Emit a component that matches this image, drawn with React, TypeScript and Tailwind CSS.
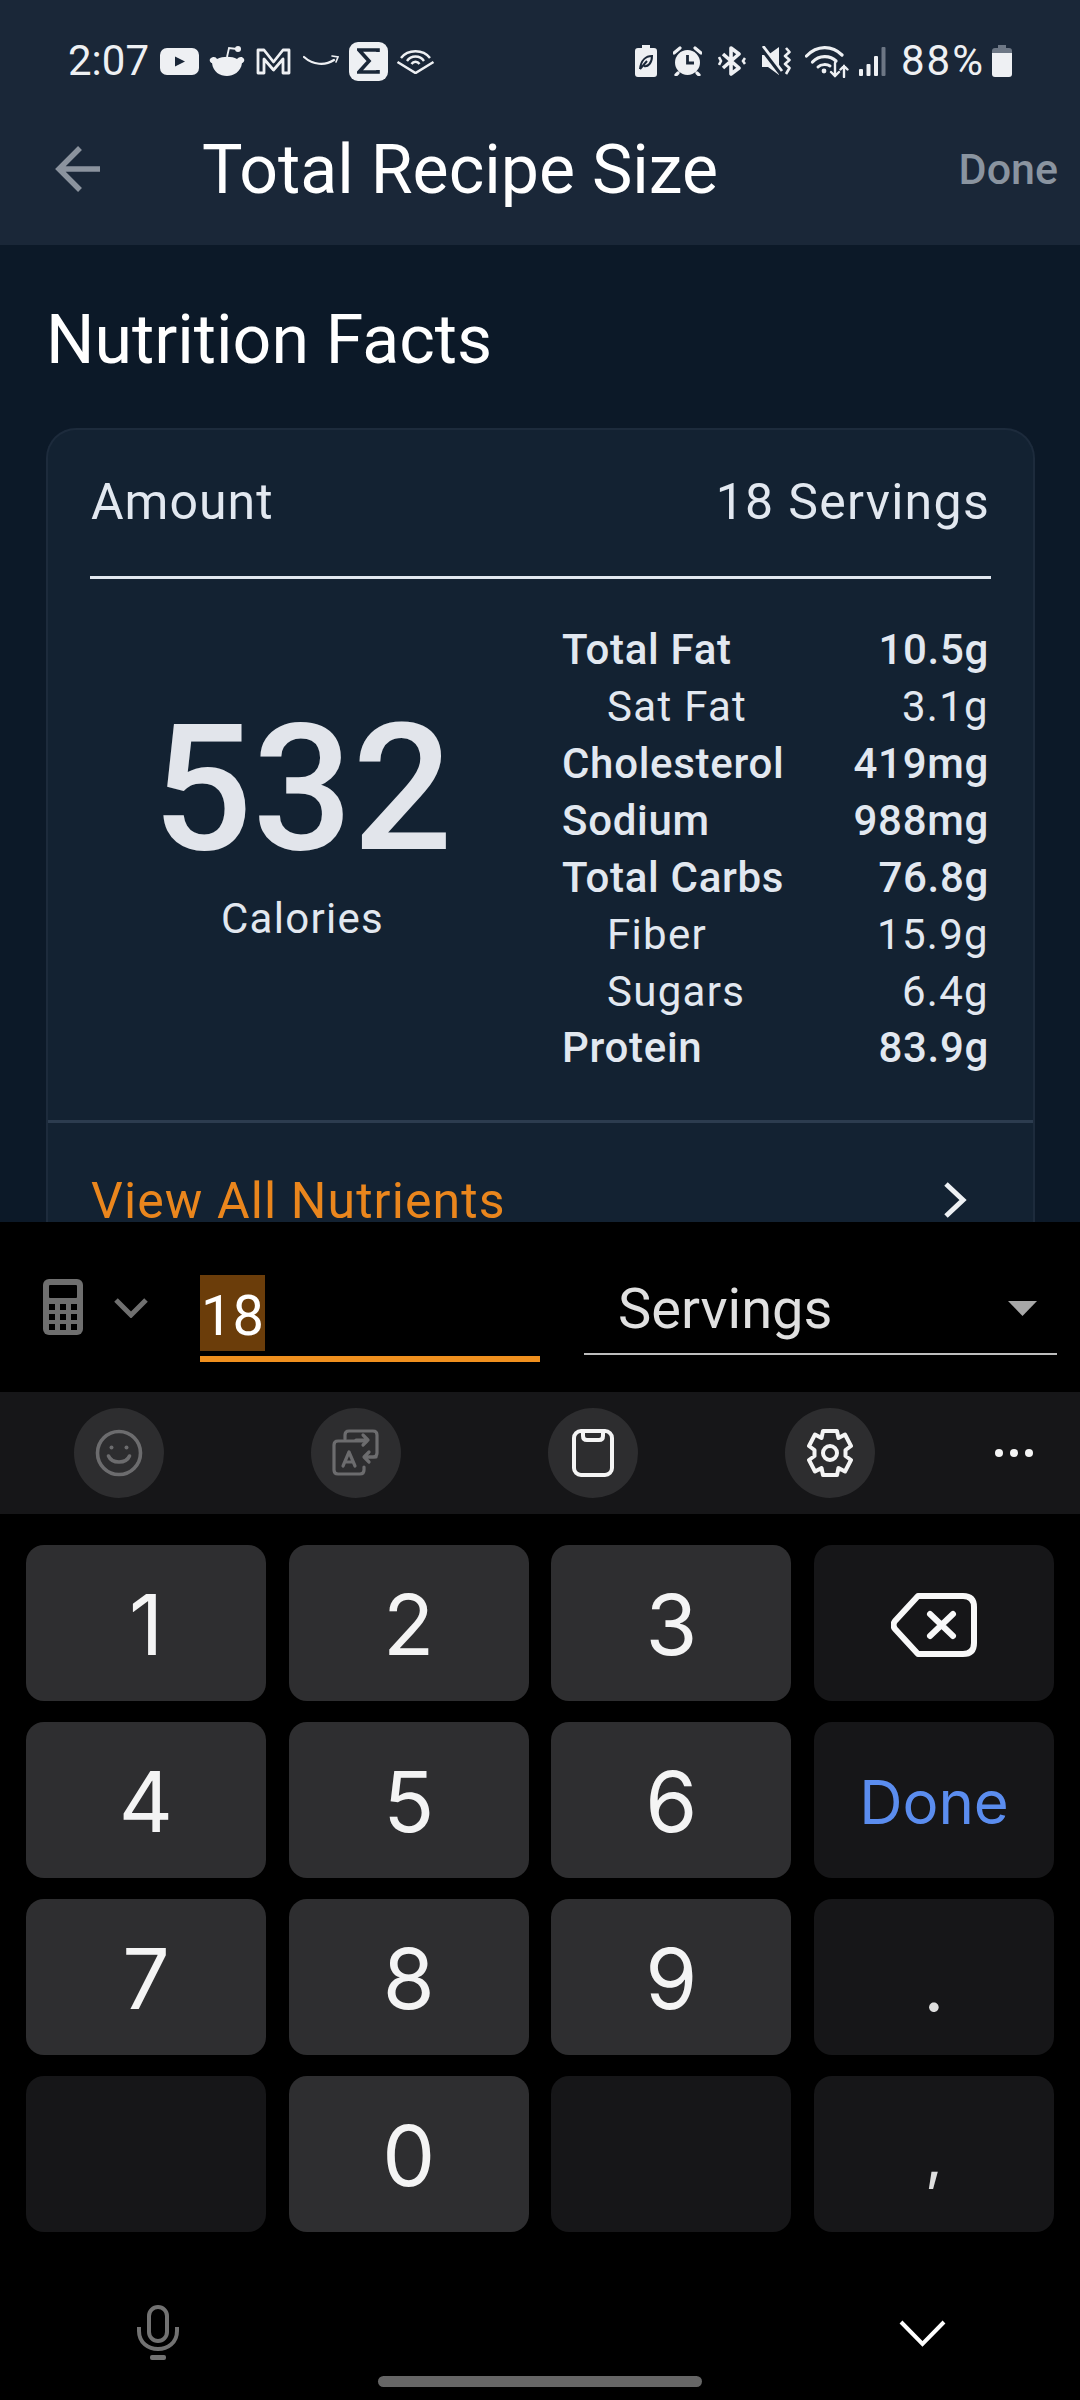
import React from "react";

const roboto = "font-['Roboto',sans-serif]";
const inter = "font-['Inter',sans-serif]";

const rows: [string, string, boolean][] = [
  ["Total Fat", "10.5g", true],
  ["Sat Fat", "3.1g", false],
  ["Cholesterol", "419mg", true],
  ["Sodium", "988mg", true],
  ["Total Carbs", "76.8g", true],
  ["Fiber", "15.9g", false],
  ["Sugars", "6.4g", false],
  ["Protein", "83.9g", true],
];

function StatusLeft() {
  const c = "#eef0f3";
  return (
    <div className="flex items-center">
      <span className="w-[92px] font-['Roboto',sans-serif] text-[42px] leading-[40px] text-[#eef0f3]">2:07</span>
      <svg width="39" height="27" viewBox="0 0 39 27"><rect width="39" height="27" rx="7" fill={c} /><path d="M15 8.5 L25 13.5 L15 18.5Z" fill="#1a2738" /></svg>
      <svg className="ml-[10px]" width="36" height="32" viewBox="0 0 36 32">
        <path d="M1 14 C4 11 7 12 8 14 C14 11 23 11 28 14 C30 12 33 11 35 14 C36 16 34 18 33 18 C32 27 24 31 18 31 C11 31 4 27 3 18 C2 18 0 16 1 14Z" fill={c} />
        <path d="M18 12 L20 3 L28 4" stroke={c} strokeWidth="1.8" fill="none" />
        <circle cx="29" cy="4" r="3" fill={c} />
      </svg>
      <svg className="ml-[11px]" width="35" height="28" viewBox="0 0 35 28" fill="none">
        <path d="M2 26 V3 H8 L17.5 15 L27 3 H33 V26 H27 V12 L17.5 23 L8 12 V26Z" stroke={c} strokeWidth="2.8" strokeLinejoin="round" />
      </svg>
      <svg className="ml-[12px]" width="36" height="14" viewBox="0 0 36 14" fill="none">
        <path d="M1 3 C10 11 22 12 31 6" stroke={c} strokeWidth="2.2" strokeLinecap="round" />
        <path d="M29 2 L35 3 L33 8" stroke={c} strokeWidth="1.6" strokeLinecap="round" />
      </svg>
      <div className="ml-[10px] flex h-[39px] w-[39px] items-center justify-center rounded-[9px] bg-[#eef0f3]">
        <svg width="23" height="26" viewBox="0 0 23 26" fill="none"><path d="M21 4 V2 H2 L12 13 L2 24 H21 V22" stroke="#1a2738" strokeWidth="3.6" /></svg>
      </div>
      <svg className="ml-[8px]" width="39" height="25" viewBox="0 0 39 25" fill="none" stroke={c}>
        <path d="M1.5 13 L19.5 24 L37.5 13" strokeWidth="2.6" strokeLinejoin="round" />
        <path d="M5 9 C12 0 27 0 34 9 M11 12 C15 6 24 6 28 12 M15.5 15 C17.5 12 21.5 12 23.5 15" strokeWidth="2.4" />
      </svg>
    </div>
  );
}

function StatusRight() {
  const c = "#eef0f3";
  return (
    <div className="flex items-center">
      <svg width="22" height="32" viewBox="0 0 22 32">
        <path d="M7 0 H15 V3 H19 Q22 3 22 6 V29 Q22 32 19 32 H3 Q0 32 0 29 V6 Q0 3 3 3 H7Z" fill={c} />
        <path d="M5 24 C6 15 11 11 17 11 C17 18 13 22 9 21 M5 24 L12 16" stroke="#1a2738" strokeWidth="2" fill="none" />
      </svg>
      <svg className="ml-[16px]" width="29" height="30" viewBox="0 0 29 30">
        <circle cx="14.5" cy="16.5" r="12.5" fill={c} />
        <path d="M14.5 9 V17 H21" stroke="#1a2738" strokeWidth="2.8" fill="none" />
        <path d="M1 7 L7 2 M28 7 L22 2 M5 27 L3 29 M24 27 L26 29" stroke={c} strokeWidth="3.2" strokeLinecap="round" />
      </svg>
      <svg className="ml-[16px]" width="28" height="30" viewBox="0 0 28 30" fill="none" stroke={c} strokeWidth="3.6">
        <path d="M5 8 L21 22 L13 28 V2 L21 8 L5 22" strokeLinejoin="round" />
        <path d="M1 11 L3 15 L1 19 M27 12 L25 15 L27 18" strokeWidth="2.6" />
      </svg>
      <svg className="ml-[16px]" width="29" height="30" viewBox="0 0 29 30" fill="none">
        <path d="M0 9 H6 L17 1 V29 L6 21 H0Z" fill={c} />
        <path d="M0 2 L19 27" stroke="#1a2738" strokeWidth="5" />
        <path d="M1 0 L20 25" stroke={c} strokeWidth="2.8" />
        <path d="M24 2 L27.5 6 L23 10 L27.5 14 L23 18 L27.5 22 L24 28" stroke={c} strokeWidth="2.6" strokeLinejoin="round" />
      </svg>
      <svg className="ml-[14px]" width="45" height="33" viewBox="0 0 45 33" fill="none" stroke={c} strokeLinecap="round">
        <path d="M1.5 11 C12 0 27 0 37 10" strokeWidth="3.2" />
        <path d="M7.5 17 C14 10 25 10 31 16" strokeWidth="3.2" />
        <path d="M13 22 C16 19 22 19 25 21" strokeWidth="3" />
        <circle cx="19" cy="26" r="2.4" fill={c} stroke="none" />
        <path d="M30 18 V31 M26 27 L30 31 L34 27 M39 32 V21 M35.5 24.5 L39 21 L42.5 24.5" strokeWidth="2.4" />
      </svg>
      <svg className="ml-[9px]" width="27" height="29" viewBox="0 0 27 29">
        <rect x="0" y="22" width="4" height="7" rx="1" fill={c} />
        <rect x="7.5" y="17" width="4" height="12" rx="1" fill={c} />
        <rect x="15" y="9" width="4" height="20" rx="1" fill={c} />
        <rect x="22.5" y="0" width="4" height="29" rx="1" fill="#6d7785" />
      </svg>
      <span className="ml-[15px] w-[85px] whitespace-nowrap font-['Roboto',sans-serif] text-[42px] leading-[40px] tracking-[2px] text-[#eef0f3]">88%</span>
      <svg className="ml-[6px]" width="20" height="32" viewBox="0 0 20 32">
        <path d="M6 0 H14 V3 H17 Q20 3 20 6 V10 H0 V6 Q0 3 3 3 H6Z" fill="#6d7785" />
        <path d="M0 8 H20 V29 Q20 32 17 32 H3 Q0 32 0 29Z" fill={c} />
      </svg>
    </div>
  );
}

function Key({ children, fn }: { children?: React.ReactNode; fn?: boolean }) {
  return (
    <div className={`flex h-[156px] items-center justify-center rounded-[18px] pt-[3px] ${fn ? "bg-[#161618]" : "bg-[#2e2e30]"} ${inter} text-[84px] leading-none text-[#f4f4f4]`}>
      {children}
    </div>
  );
}

function Round({ children }: { children: React.ReactNode }) {
  return <div className="flex h-[90px] w-[90px] items-center justify-center rounded-full bg-[#2d2d2f]">{children}</div>;
}

export default function App() {
  return (
    <div className={`flex h-[2400px] w-[1080px] flex-col overflow-hidden bg-black ${roboto}`}>
      {/* header */}
      <header className="flex h-[245px] flex-col bg-[#1a2738]">
        <div className="flex h-[124px] items-center justify-between pb-[2px] pl-[68px] pr-[68px]">
          <StatusLeft />
          <StatusRight />
        </div>
        <div className="flex h-[90px] items-center pl-[55px] pr-[22px]">
          <svg width="45" height="46" viewBox="0 0 45 46" fill="none" stroke="#8b939e" strokeWidth="5.5">
            <path d="M45 23 H4 M25 2 L4 23 L25 44" />
          </svg>
          <h1 className="ml-[102px] flex-1 pt-[2px] text-[68px] font-normal leading-none text-white">Total Recipe Size</h1>
          <span className="text-[43px] font-medium leading-none text-[#8a94a0]">Done</span>
        </div>
      </header>

      {/* content */}
      <main className="h-[977px] overflow-hidden bg-[#0c1928] pl-[46px] pr-[45px]">
        <h2 className="mt-[62px] h-[74px] text-[68px] font-normal leading-[66px] text-white">Nutrition Facts</h2>
        <section className="mt-[47px] rounded-t-[30px] border-x-2 border-t-2 border-[#1d2b3c] bg-[#132232]">
          <div className="flex h-[146px] items-center justify-between px-[43px] pb-[2px] text-[50px] leading-none tracking-[1px] text-[#e2e8f0]">
            <span>Amount</span>
            <span className="tracking-[1.3px]">18 Servings</span>
          </div>
          <div className="mx-[42px] h-[3px] bg-[#e2e8f0]" />
          <div className="flex h-[541px] items-start">
            <div className="flex w-[514px] flex-col items-center pr-[5px] pt-[122px]">
              <span className="text-[176px] font-medium leading-[176px] text-[#e2e5eb]">532</span>
              <span className="mt-[17px] text-[42px] leading-[50px] tracking-[1.3px] text-[#e2e8f0]">Calories</span>
            </div>
            <div className="flex w-[427px] flex-col pt-[43px]">
              {rows.map(([n, v, bold]) => (
                <div key={n} className={`flex h-[56.86px] items-center justify-between text-[42px] leading-none text-[#e2e8f0] ${bold ? "font-medium tracking-[0.7px]" : "font-normal tracking-[1.3px]"}`}>
                  <span className={bold ? "" : "pl-[45px]"}>{n}</span>
                  <span>{v}</span>
                </div>
              ))}
            </div>
          </div>
          <div className="h-[3px] bg-[#2c3c4f]" />
          <div className="flex h-[140px] items-start justify-between pl-[43px] pr-[66px] pt-[53px]">
            <span className="text-[50px] leading-none tracking-[1.1px] text-[#ea861d]">View All Nutrients</span>
            <svg className="mt-[5px]" width="24" height="38" viewBox="0 0 24 38" fill="none" stroke="#eef1f4" strokeWidth="5">
              <path d="M3 3 L20 19 L3 35" />
            </svg>
          </div>
        </section>
      </main>

      {/* quantity input row */}
      <div className="flex h-[170px] items-start bg-black">
        <svg className="ml-[43px] mt-[57px]" width="40" height="56" viewBox="0 0 40 56">
          <rect width="40" height="56" rx="6" fill="#6f6f6f" />
          <rect x="6" y="6" width="28" height="13" rx="1" fill="#000" />
          {[25, 35, 45].map((y) =>
            [6, 17, 28].map((x) => <rect key={`${x}-${y}`} x={x} y={y} width="6" height="6" fill="#000" />)
          )}
        </svg>
        <svg className="ml-[31px] mt-[76px]" width="34" height="20" viewBox="0 0 34 20" fill="none" stroke="#707070" strokeWidth="5">
          <path d="M2 2 L17 17 L32 2" />
        </svg>
        <div className="ml-[52px] flex w-[340px] flex-col pt-[53px]">
          <span className="flex h-[76px] w-[65px] items-center justify-center bg-[#6b3d0a] pt-[6px] text-[56px] leading-none text-white">18</span>
          <div className="mt-[5px] h-[6px] bg-[#f0901e]" />
        </div>
        <div className="ml-[44px] flex w-[473px] flex-col pt-[60px]">
          <div className="flex h-[71px] items-center justify-between pb-[18px] pl-[34px] pr-[20px]">
            <span className="text-[56px] leading-none text-[#e0e0e0]">Servings</span>
            <svg width="29" height="15" viewBox="0 0 29 15"><path d="M0 0 H29 L14.5 15Z" fill="#a8a8a8" /></svg>
          </div>
          <div className="h-[2px] bg-[#bdbdbd]" />
        </div>
      </div>

      {/* keyboard toolbar */}
      <div className="flex h-[122px] items-center justify-between bg-[#161618] pl-[74px] pr-[44px]">
        <div className="flex gap-[147px]">
          <Round>
            <svg width="48" height="48" viewBox="0 0 48 48" fill="none" stroke="#6c6c6e" strokeWidth="3.6" strokeLinecap="round">
              <circle cx="24" cy="24" r="21.5" />
              <circle cx="16.5" cy="18.5" r="2" fill="#6c6c6e" stroke="none" />
              <circle cx="31.5" cy="18.5" r="2" fill="#6c6c6e" stroke="none" />
              <path d="M13.5 27 C17 35 31 35 34.5 27" />
            </svg>
          </Round>
          <Round>
            <svg width="48" height="48" viewBox="0 0 48 48" fill="none" stroke="#6c6c6e" strokeWidth="3.2" strokeLinecap="round" strokeLinejoin="round">
              <path d="M13 10 V6 Q13 2 17 2 H41 Q45 2 45 6 V24 Q45 28 41 28 H37" />
              <path d="M24 11 H36 M31 6 L36 11 L31 16" />
              <path d="M33 12 H6 Q2 12 2 16 V41 Q2 45 6 45 H28 Q32 45 32 41 V38" />
              <path d="M11 37 L17 23 L23 37 M13 33 H21" />
              <path d="M44 28 H33 M37 23 L32 28 L37 33" />
            </svg>
          </Round>
          <Round>
            <svg width="42" height="48" viewBox="0 0 42 48" fill="none" stroke="#f4f4f4" strokeWidth="4" strokeLinejoin="round">
              <rect x="2" y="2" width="38" height="44" rx="7" />
              <path d="M11 2 V7 Q11 11 15 11 H27 Q31 11 31 7 V2" />
            </svg>
          </Round>
          <Round>
            <svg width="46" height="48" viewBox="0 0 46 48" fill="none" stroke="#f4f4f4" strokeWidth="4" strokeLinejoin="round">
              <circle cx="23" cy="24" r="7" />
              <path d="M16 2 H30 L31.5 9 L38 5.5 L44 17 L38.5 21 V27 L44 31 L38 42.5 L31.5 39 L30 46 H16 L14.5 39 L8 42.5 L2 31 L7.5 27 V21 L2 17 L8 5.5 L14.5 9Z" />
            </svg>
          </Round>
        </div>
        <svg className="mr-[2px]" width="40" height="10" viewBox="0 0 40 10" fill="#f4f4f4">
          <circle cx="5" cy="5" r="4" /><circle cx="20" cy="5" r="4" /><circle cx="35" cy="5" r="4" />
        </svg>
      </div>

      {/* keys */}
      <div className="grid grid-cols-4 gap-x-[22.67px] gap-y-[21px] bg-black pl-[26px] pr-[26px] pt-[31px]">
        <Key>1</Key>
        <Key>2</Key>
        <Key>3</Key>
        <Key fn>
          <svg width="86" height="64" viewBox="0 0 86 64" fill="none" stroke="#f8f8f8" strokeWidth="6" strokeLinecap="round" strokeLinejoin="round">
            <path d="M27 3 H72 Q83 3 83 14 V50 Q83 61 72 61 H27 L4 36 Q1 32 4 28Z" />
            <path d="M39 21 L62 43 M62 21 L39 43" />
          </svg>
        </Key>
        <Key>4</Key>
        <Key>5</Key>
        <Key>6</Key>
        <Key fn><span className="text-[60px] text-[#5b8def]">Done</span></Key>
        <Key>7</Key>
        <Key>8</Key>
        <Key>9</Key>
        <Key fn><span className="mt-[14px] text-[72px] text-[#dedede]">.</span></Key>
        <Key fn />
        <Key>0</Key>
        <Key fn />
        <Key fn><span className="text-[62px] text-[#dedede]">,</span></Key>
      </div>

      {/* bottom */}
      <div className="relative flex-1 bg-black">
        <div className="flex items-start justify-between pl-[137px] pr-[134px] pt-[73px]">
          <svg width="42" height="55" viewBox="0 0 42 55" fill="none" stroke="#727272" strokeWidth="4">
            <rect x="12" y="2" width="18" height="34" rx="9" />
            <path d="M2 22 V26 C2 50 40 50 40 26 V22" />
            <rect x="13" y="50" width="16" height="5" rx="2" fill="#727272" stroke="none" />
          </svg>
          <svg className="mt-[15px]" width="47" height="27" viewBox="0 0 47 27" fill="none" stroke="#ffffff" strokeWidth="4">
            <path d="M2 2 L23.5 24 L45 2" />
          </svg>
        </div>
        <div className="mx-auto mt-[16px] h-[11px] w-[324px] rounded-full bg-[#666666]" />
      </div>
    </div>
  );
}
